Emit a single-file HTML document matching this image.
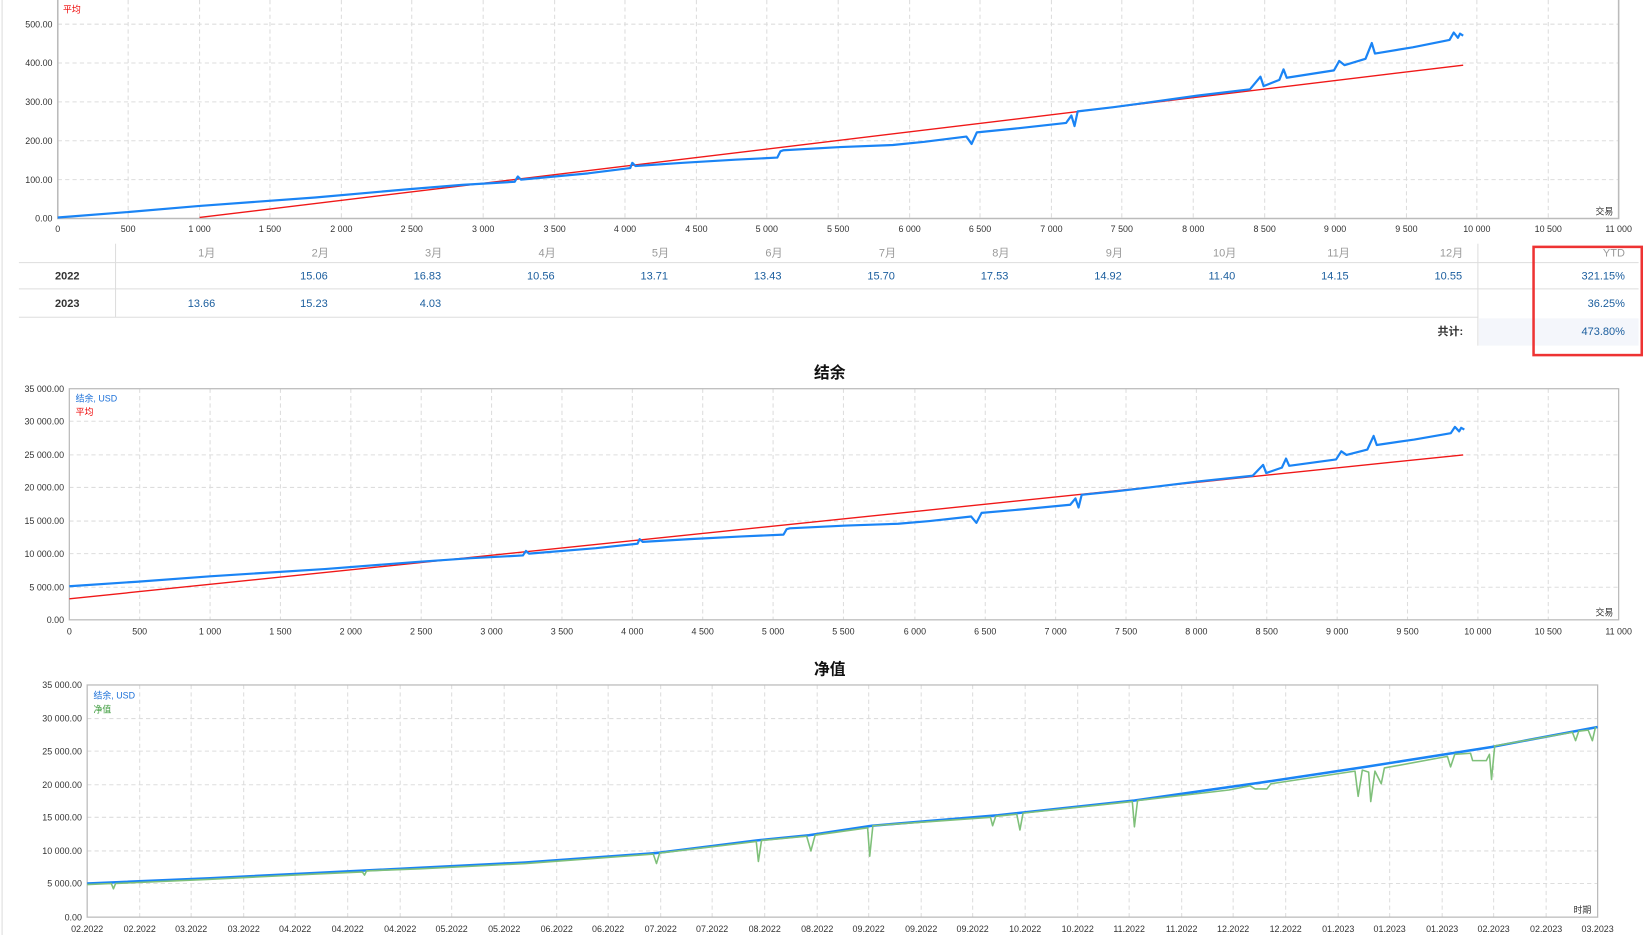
<!DOCTYPE html>
<html><head><meta charset="utf-8"><style>
html,body{margin:0;padding:0;background:#fff;width:1647px;height:935px;overflow:hidden}
svg{display:block}
text{font-family:"Liberation Sans","Noto Sans CJK SC",sans-serif}
.ax{font-size:8.5px;fill:#333}
.g{stroke:#ddd;stroke-width:1;stroke-dasharray:4,3;fill:none}
.hd{font-size:10.5px;fill:#999;text-anchor:end}
.v{font-size:10.5px;fill:#1b5e9e;text-anchor:end}
.yr{font-size:10.5px;fill:#333;font-weight:bold;text-anchor:middle}
.tl{font-size:15px;font-weight:bold;fill:#111;text-anchor:middle}
.dl{font-size:8.5px;fill:#333;text-anchor:middle}
</style></head><body>
<svg width="1647" height="935" viewBox="0 0 1568 890" preserveAspectRatio="none">
<line x1="2" y1="0" x2="2" y2="890" stroke="#ddd"/>
<!-- chart 1 -->
<g>
<line class="g" x1="55" y1="23" x2="1541" y2="23"/><line class="g" x1="55" y1="60" x2="1541" y2="60"/><line class="g" x1="55" y1="97" x2="1541" y2="97"/><line class="g" x1="55" y1="134" x2="1541" y2="134"/><line class="g" x1="55" y1="171" x2="1541" y2="171"/>
<path class="g" d="M122 0V208M190 0V208M257 0V208M325 0V208M392 0V208M460 0V208M528 0V208M595 0V208M663 0V208M730 0V208M798 0V208M866 0V208M933 0V208M1001 0V208M1068 0V208M1136 0V208M1204 0V208M1271 0V208M1339 0V208M1406 0V208M1474 0V208"/>
<path d="M55 0V208H1541V0" fill="none" stroke="#bbb" stroke-width="1.5"/>
<g class="ax" text-anchor="end"><text x="50" y="26">500.00</text><text x="50" y="63">400.00</text><text x="50" y="100">300.00</text><text x="50" y="137">200.00</text><text x="50" y="174">100.00</text><text x="50" y="211">0.00</text></g>
<g class="ax" text-anchor="middle"><text x="55" y="221">0</text><text x="122" y="221">500</text><text x="190" y="221">1 000</text><text x="257" y="221">1 500</text><text x="325" y="221">2 000</text><text x="392" y="221">2 500</text><text x="460" y="221">3 000</text><text x="528" y="221">3 500</text><text x="595" y="221">4 000</text><text x="663" y="221">4 500</text><text x="730" y="221">5 000</text><text x="798" y="221">5 500</text><text x="866" y="221">6 000</text><text x="933" y="221">6 500</text><text x="1001" y="221">7 000</text><text x="1068" y="221">7 500</text><text x="1136" y="221">8 000</text><text x="1204" y="221">8 500</text><text x="1271" y="221">9 000</text><text x="1339" y="221">9 500</text><text x="1406" y="221">10 000</text><text x="1474" y="221">10 500</text><text x="1541" y="221">11 000</text></g>
<text class="ax" x="1519" y="204">交易</text>
<text x="60" y="12" style="font-size:8.5px;fill:#e00">平均</text>
<line x1="190" y1="207" x2="1393" y2="62" stroke="#f01818" stroke-width="1.3"/>
<polyline id="b1" fill="none" stroke="#1a84f5" stroke-width="2.2" stroke-linejoin="round" vector-effect="non-scaling-stroke" points="55,207 120,202 190,196 300,188 390,180 440,176 490,173 493,168 496,171 560,165 600,160 602,155 605,158 650,155 700,152 740,150 743,144 746,143 800,140 850,138 880,135 920,130 925,137 930,126 970,122 1015,117 1020,110 1023,120 1026,106 1060,102 1090,98 1140,91 1190,85 1200,73 1203,82 1218,76 1222,66 1225,74 1270,67 1275,58 1280,62 1300,56 1306,41 1309,51 1345,45 1380,38 1384,31 1388,36 1390,32 1393,34"/>
</g>
<!-- table -->
<g>
<line x1="18" y1="250" x2="1560" y2="250" stroke="#ddd"/><line x1="18" y1="275" x2="1560" y2="275" stroke="#ddd"/><line x1="18" y1="302" x2="1407" y2="302" stroke="#ddd"/>
<line x1="110" y1="232" x2="110" y2="302" stroke="#ddd"/><line x1="1407" y1="232" x2="1407" y2="329" stroke="#ddd"/>
<rect x="1408" y="303" width="152" height="26" fill="#f4f6fb"/>
<text class="hd" x="205" y="244">1月</text><text class="hd" x="313" y="244">2月</text><text class="hd" x="421" y="244">3月</text><text class="hd" x="529" y="244">4月</text><text class="hd" x="637" y="244">5月</text><text class="hd" x="745" y="244">6月</text><text class="hd" x="853" y="244">7月</text><text class="hd" x="961" y="244">8月</text><text class="hd" x="1069" y="244">9月</text><text class="hd" x="1177" y="244">10月</text><text class="hd" x="1285" y="244">11月</text><text class="hd" x="1393" y="244">12月</text><text class="hd" x="1547" y="244">YTD</text>
<text class="yr" x="64" y="266">2022</text><text class="yr" x="64" y="292">2023</text>
<text class="v" x="312" y="266">15.06</text><text class="v" x="420" y="266">16.83</text><text class="v" x="528" y="266">10.56</text><text class="v" x="636" y="266">13.71</text><text class="v" x="744" y="266">13.43</text><text class="v" x="852" y="266">15.70</text><text class="v" x="960" y="266">17.53</text><text class="v" x="1068" y="266">14.92</text><text class="v" x="1176" y="266">11.40</text><text class="v" x="1284" y="266">14.15</text><text class="v" x="1392" y="266">10.55</text><text class="v" x="1547" y="266">321.15%</text>
<text class="v" x="205" y="292">13.66</text><text class="v" x="312" y="292">15.23</text><text class="v" x="420" y="292">4.03</text><text class="v" x="1547" y="292">36.25%</text>
<text x="1393" y="319" style="font-size:10.5px;fill:#333;font-weight:bold;text-anchor:end">共计:</text><text class="v" x="1547" y="319">473.80%</text>
<rect x="1460" y="235" width="103" height="103" fill="none" stroke="#ee3333" stroke-width="2.4"/>
</g>
<!-- chart 2 -->
<text class="tl" x="790" y="360">结余</text>
<g>
<path class="g" d="M66 401H1541M66 433H1541M66 464H1541M66 496H1541M66 527H1541M66 559H1541"/>
<path class="g" d="M133 370V590M200 370V590M267 370V590M334 370V590M401 370V590M468 370V590M535 370V590M602 370V590M669 370V590M736 370V590M803 370V590M871 370V590M938 370V590M1005 370V590M1072 370V590M1139 370V590M1206 370V590M1273 370V590M1340 370V590M1407 370V590M1474 370V590"/>
<rect x="66" y="370" width="1475" height="220" fill="none" stroke="#bbb" stroke-width="1.2"/>
<g class="ax" text-anchor="end"><text x="61" y="373">35 000.00</text><text x="61" y="404">30 000.00</text><text x="61" y="436">25 000.00</text><text x="61" y="467">20 000.00</text><text x="61" y="499">15 000.00</text><text x="61" y="530">10 000.00</text><text x="61" y="562">5 000.00</text><text x="61" y="593">0.00</text></g>
<g class="ax" text-anchor="middle"><text x="66" y="604">0</text><text x="133" y="604">500</text><text x="200" y="604">1 000</text><text x="267" y="604">1 500</text><text x="334" y="604">2 000</text><text x="401" y="604">2 500</text><text x="468" y="604">3 000</text><text x="535" y="604">3 500</text><text x="602" y="604">4 000</text><text x="669" y="604">4 500</text><text x="736" y="604">5 000</text><text x="803" y="604">5 500</text><text x="871" y="604">6 000</text><text x="938" y="604">6 500</text><text x="1005" y="604">7 000</text><text x="1072" y="604">7 500</text><text x="1139" y="604">8 000</text><text x="1206" y="604">8 500</text><text x="1273" y="604">9 000</text><text x="1340" y="604">9 500</text><text x="1407" y="604">10 000</text><text x="1474" y="604">10 500</text><text x="1541" y="604">11 000</text></g>
<text class="ax" x="1519" y="586">交易</text>
<text x="72" y="382" style="font-size:8.5px;fill:#1a6fd8">结余, USD</text>
<text x="72" y="395" style="font-size:8.5px;fill:#e00">平均</text>
<line x1="66" y1="570" x2="1393" y2="433" stroke="#f01818" stroke-width="1.3"/>
<use href="#b1" transform="matrix(0.9926,0,0,0.862,11.4,379.6)"/>
</g>
<!-- chart 3 -->
<text class="tl" x="790" y="642">净值</text>
<g>
<path class="g" d="M83 684H1521M83 715H1521M83 747H1521M83 778H1521M83 810H1521M83 841H1521"/>
<path class="g" d="M133 652V873M182 652V873M232 652V873M281 652V873M331 652V873M381 652V873M430 652V873M480 652V873M530 652V873M579 652V873M629 652V873M678 652V873M728 652V873M778 652V873M827 652V873M877 652V873M926 652V873M976 652V873M1026 652V873M1075 652V873M1125 652V873M1174 652V873M1224 652V873M1274 652V873M1323 652V873M1373 652V873M1422 652V873M1472 652V873"/>
<rect x="83" y="652" width="1438" height="221" fill="none" stroke="#bbb" stroke-width="1.2"/>
<g class="ax" text-anchor="end"><text x="78" y="655">35 000.00</text><text x="78" y="687">30 000.00</text><text x="78" y="718">25 000.00</text><text x="78" y="750">20 000.00</text><text x="78" y="781">15 000.00</text><text x="78" y="813">10 000.00</text><text x="78" y="844">5 000.00</text><text x="78" y="876">0.00</text></g>
<g class="dl"><text x="83" y="887">02.2022</text><text x="133" y="887">02.2022</text><text x="182" y="887">03.2022</text><text x="232" y="887">03.2022</text><text x="281" y="887">04.2022</text><text x="331" y="887">04.2022</text><text x="381" y="887">04.2022</text><text x="430" y="887">05.2022</text><text x="480" y="887">05.2022</text><text x="530" y="887">06.2022</text><text x="579" y="887">06.2022</text><text x="629" y="887">07.2022</text><text x="678" y="887">07.2022</text><text x="728" y="887">08.2022</text><text x="778" y="887">08.2022</text><text x="827" y="887">09.2022</text><text x="877" y="887">09.2022</text><text x="926" y="887">09.2022</text><text x="976" y="887">10.2022</text><text x="1026" y="887">10.2022</text><text x="1075" y="887">11.2022</text><text x="1125" y="887">11.2022</text><text x="1174" y="887">12.2022</text><text x="1224" y="887">12.2022</text><text x="1274" y="887">01.2023</text><text x="1323" y="887">01.2023</text><text x="1373" y="887">01.2023</text><text x="1422" y="887">02.2023</text><text x="1472" y="887">02.2023</text><text x="1521" y="887">03.2023</text></g>
<text class="ax" x="1498" y="869">时期</text>
<text x="89" y="665" style="font-size:8.5px;fill:#1a6fd8">结余, USD</text>
<text x="89" y="678" style="font-size:8.5px;fill:#3a9a3a">净值</text>
<polyline fill="none" stroke="#1a84f5" stroke-width="2.4" points="83,841 200,836 300,831 400,826 500,821 625,812 720,800 770,795 830,786 950,776 1080,762 1200,745 1300,730 1420,711 1521,692"/>
<polyline fill="none" stroke="#7fc07a" stroke-width="1.5" stroke-linejoin="round" points="83,842 106,841 108,846 110,841 200,837 300,832 345,830 347,833 349,829 400,827 500,822 622,813 625,822 628,812 720,801 722,820 725,800 768,796 772,810 776,795 826,788 828,815 831,786 943,778 945,786 948,777 968,775 971,790 974,774 1078,763 1080,787 1083,762 1170,752 1190,748 1195,751 1206,751 1210,746 1290,734 1293,758 1297,733 1303,735 1305,763 1309,734 1315,746 1318,731 1378,720 1381,730 1385,718 1400,717 1402,724 1415,724 1418,718 1420,742 1423,710 1497,697 1500,705 1503,696 1512,695 1516,705 1519,692"/>
</g>
</svg>
</body></html>
